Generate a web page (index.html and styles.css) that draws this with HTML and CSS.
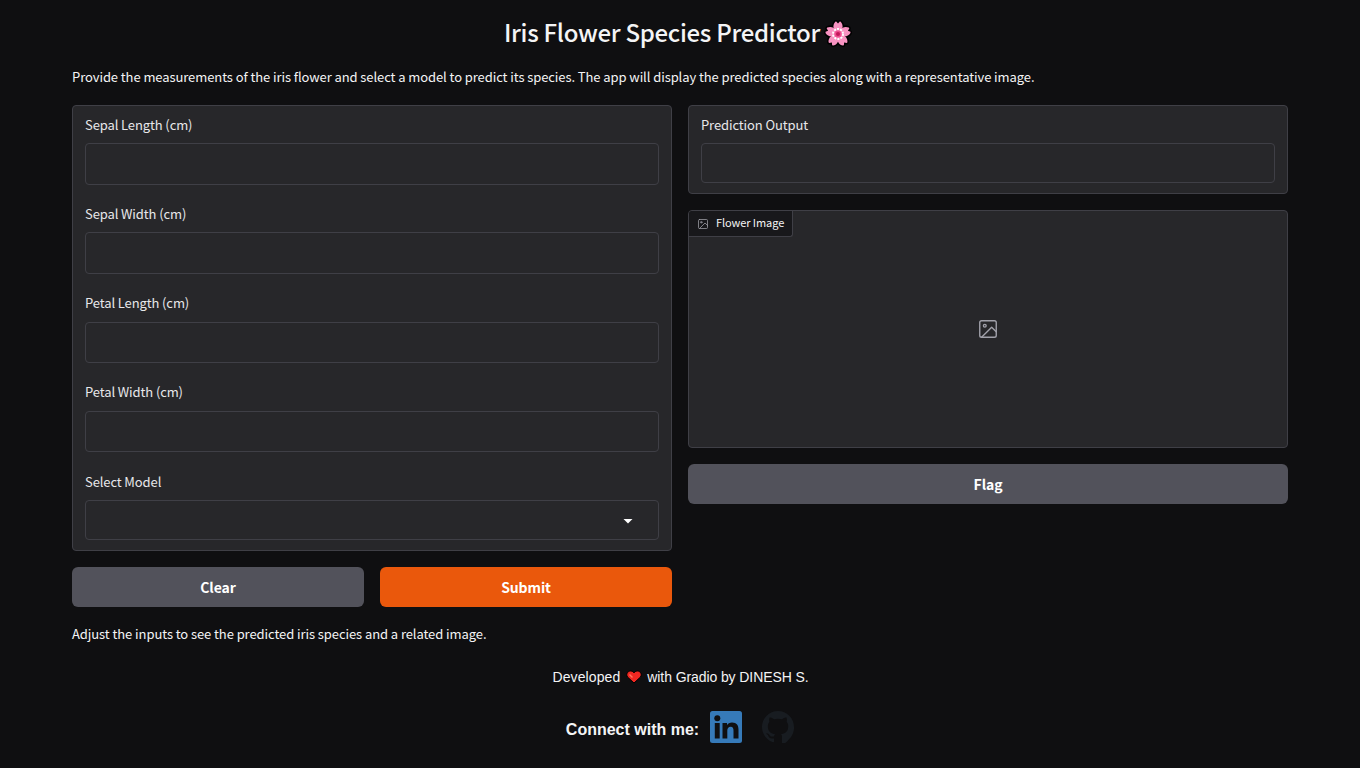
FILE: index.html
```html
<!DOCTYPE html>
<html lang="en">
<head>
<meta charset="utf-8">
<title>Iris Flower Species Predictor</title>
<link rel="stylesheet" href="styles.css">
</head>
<body>
<main class="app">
  <h1 class="title"><span>Iris Flower Species Predictor</span><svg class="blossom" viewBox="0 0 28 28"><defs><path id="petal" d="M14 15L11 11C8.800 8 8.800 4.500 11.200 1.800L12.200 1.500L14 3.600L15.800 1.500L16.800 1.800C19.200 4.500 19.200 8 17 11Z"/></defs><g fill="#000" stroke="#000" stroke-width="3" stroke-linejoin="round"><use href="#petal"/><use href="#petal" transform="rotate(72 14 14)"/><use href="#petal" transform="rotate(144 14 14)"/><use href="#petal" transform="rotate(216 14 14)"/><use href="#petal" transform="rotate(288 14 14)"/></g><circle cx="14" cy="14" r="7" fill="#f892c1"/><g fill="#f892c1"><use href="#petal"/><use href="#petal" transform="rotate(72 14 14)"/><use href="#petal" transform="rotate(144 14 14)"/><use href="#petal" transform="rotate(216 14 14)"/><use href="#petal" transform="rotate(288 14 14)"/></g><circle cx="14" cy="14" r="5" fill="none" stroke="#fff" stroke-width="2" stroke-dasharray="2 1.140"/><circle cx="14" cy="14" r="3.600" fill="#ee4f91"/><circle cx="14" cy="14" r="2" fill="#c2185b"/></svg></h1>
  <p class="intro">Provide the measurements of the iris flower and select a model to predict its species. The app will display the predicted species along with a representative image.</p>
  <div class="columns">
    <section class="column">
      <div class="form">
        <label class="field"><span class="label">Sepal Length (cm)</span><span class="input"></span></label>
        <label class="field"><span class="label">Sepal Width (cm)</span><span class="input"></span></label>
        <label class="field"><span class="label">Petal Length (cm)</span><span class="input"></span></label>
        <label class="field"><span class="label">Petal Width (cm)</span><span class="input"></span></label>
        <label class="field"><span class="label">Select Model</span><span class="input select"><svg class="caret" viewBox="0 0 18 18"><path d="M4.500 7h9l-4.500 4.500z" fill="#fff"/></svg></span></label>
      </div>
      <div class="buttons"><button class="button">Clear</button><button class="button primary">Submit</button></div>
    </section>
    <section class="column">
      <div class="form output"><span class="label">Prediction Output</span><span class="input short"></span></div>
      <div class="preview">
        <div class="badge"><svg class="badge-icon" viewBox="0 0 24 24"><g class="picture"><rect x="3" y="3" width="18" height="18" rx="2"/><circle cx="8.500" cy="8.500" r="1.500"/><path d="M21 15l-5-5L5 21"/></g></svg><span class="badge-text">Flower Image</span></div>
        <svg class="empty-icon" viewBox="0 0 24 24"><g class="picture"><rect x="3" y="3" width="18" height="18" rx="2"/><circle cx="8.500" cy="8.500" r="1.500"/><path d="M21 15l-5-5L5 21"/></g></svg>
      </div>
      <button class="button flag">Flag</button>
    </section>
  </div>
  <p class="note">Adjust the inputs to see the predicted iris species and a related image.</p>
  <p class="credit"><span>Developed</span><svg class="heart" viewBox="0 0 16 14"><path d="M8 13L1.500 7C-.500 4 2 1 4.500 1C6.500 1 7.500 2 8 3C8.500 2 9.500 1 11.500 1C14 1 16.500 4 14.500 7Z" fill="#f02822" stroke="#000"/><path d="M3.500 4.500l3 3" stroke="#ff705c" stroke-width="1.500"/></svg><span>with Gradio by DINESH S.</span></p>
  <div class="connect">
    <strong>Connect with me:</strong>
    <svg class="social" viewBox="0 0 32 32"><rect width="32" height="32" rx="2.500" fill="#367ab9"/><g fill="#0f0f11"><circle cx="7.300" cy="7.200" r="3"/><path d="M4.800 12H9.700V27.500H4.800ZM12.500 12H17V14.200C18 12.500 19.700 11.600 22 11.600C26.800 11.600 28.500 14.600 28.500 18.800V27.500H23.500V19.800C23.500 17.700 23 15.700 20.700 15.700C18.200 15.700 17.300 17.500 17.300 19.600V27.500H12.500Z"/></g></svg>
    <svg class="social" viewBox="0 0 16 16"><path fill="#181c21" d="M8 0C3.580 0 0 3.580 0 8c0 3.540 2.290 6.530 5.470 7.590.4.070.55-.17.55-.38 0-.19-.01-.82-.01-1.490-2.010.37-2.530-.49-2.690-.94-.09-.23-.48-.94-.82-1.130-.28-.15-.68-.52-.01-.53.63-.01 1.080.58 1.230.82.72 1.210 1.870.87 2.330.66.070-.52.28-.87.51-1.070-1.780-.2-3.640-.89-3.640-3.950 0-.87.31-1.590.82-2.150-.08-.2-.36-1.020.08-2.120 0 0 .67-.21 2.200.82.64-.18 1.320-.27 2-.27s1.360.09 2 .27c1.530-1.040 2.200-.82 2.200-.82.44 1.100.16 1.920.08 2.120.51.56.82 1.270.82 2.150 0 3.070-1.870 3.750-3.650 3.950.29.25.54.73.54 1.480v3.750c.87-.08 2.500-1.160 3.600-2.700A8.010 8.010 0 0 0 16 8c0-4.420-3.580-8-8-8z"/></svg>
  </div>
</main>
</body>
</html>
```
FILE: styles.css
```css
* { box-sizing: border-box; }
body { margin: 0; height: 768px; overflow: hidden; background: #0f0f11; color: #f4f4f5; font-family: "Noto Sans CJK SC", sans-serif; }
.app { padding: 15px 72px 0; }
h1, p { margin: 0; }
.title { display: flex; justify-content: center; height: 34px; padding-right: 4px; align-items: center; font-size: 24px; line-height: 34px; font-weight: 500; letter-spacing: -0.290px; white-space: nowrap; }
.blossom { width: 28px; height: 28px; margin: 3px 0 0 4px; flex: none; }
.intro { margin-top: 16px; height: 23px; font-size: 13px; line-height: 23px; letter-spacing: -0.084px; white-space: nowrap; }
.columns { display: grid; grid-template-columns: 600px 600px; gap: 16px; margin-top: 17px; }
.column { display: flex; flex-direction: column; gap: 16px; }
.form { height: 446px; border: 1px solid #3f3f46; border-radius: 4px; background: #27272a; padding: 8.500px 12px 0; }
.field { display: block; height: 89.250px; }
.label { display: block; height: 20px; margin-bottom: 8.500px; font-size: 13px; line-height: 20px; letter-spacing: -0.110px; color: #e8e8ea; white-space: nowrap; }
.input { display: block; height: 41.500px; border: 1px solid #3f3f46; border-radius: 4px; }
.select { height: 40px; display: flex; align-items: center; justify-content: flex-end; padding: 2px 21px 0 0; }
.caret { width: 18px; height: 18px; }
.buttons { display: grid; grid-template-columns: 1fr 1fr; gap: 16px; }
.button { height: 40px; border: 0; border-radius: 6px; background: #52525b; color: #fff; font: 700 14px/40px "Noto Sans CJK SC", sans-serif; letter-spacing: -0.100px; padding: 0; }
.primary { background: #ea580c; }
.output { height: 89px; }
.short { height: 40px; }
.preview { height: 238px; position: relative; border: 1px solid #3f3f46; border-radius: 4px; background: #27272a; display: flex; align-items: center; justify-content: center; }
.badge { position: absolute; left: 0; top: 0; width: 104px; height: 26px; padding-left: 8px; display: flex; align-items: center; background: #18181b; border: solid #3f3f46; border-width: 0 1px 1px 0; border-radius: 3px 0 3px 0; }
.badge-icon { width: 12px; height: 12px; margin-right: 7px; flex: none; }
.badge-text { font-size: 11px; line-height: 21px; padding-bottom: 3px; letter-spacing: -0.080px; white-space: nowrap; }
.picture { fill: none; stroke: #a1a1aa; stroke-width: 1.500; stroke-linecap: round; stroke-linejoin: round; }
.empty-icon { width: 22px; height: 22px; }
.note { margin-top: 15px; height: 23px; font-size: 13px; line-height: 23px; letter-spacing: -0.080px; white-space: nowrap; }
.credit { display: flex; justify-content: center; margin-top: 21px; padding-left: 1px; height: 22px; font: 14px/22px "Liberation Sans", Arial, sans-serif; letter-spacing: -0.090px; white-space: nowrap; }
.credit span:first-child { letter-spacing: 0.100px; }
.heart { width: 16px; height: 14px; margin: 4px 5px 0 6px; }
.connect { display: flex; justify-content: center; align-items: center; margin-top: 22px; height: 34px; font: 16px/34px "Liberation Sans", Arial, sans-serif; white-space: nowrap; }
.connect strong { padding-top: 5px; margin-right: 11px; }
.social { width: 32px; height: 32px; flex: none; }
.social + .social { margin-left: 20px; }
```
